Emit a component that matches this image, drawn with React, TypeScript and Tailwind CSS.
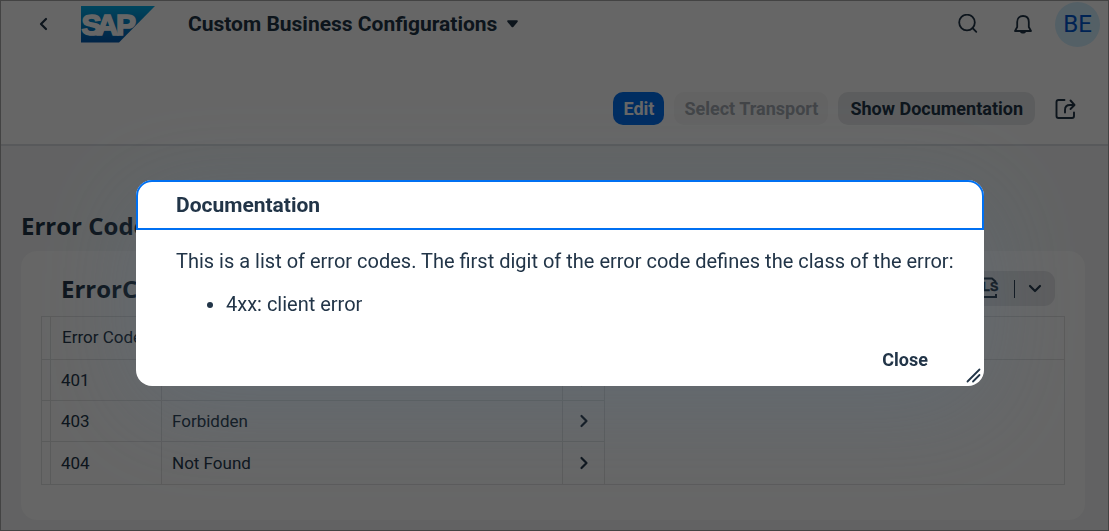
import React from "react";

type ErrorRow = { code: string; description: string };

const rows: ErrorRow[] = [
  { code: "401", description: "Unauthorized" },
  { code: "403", description: "Forbidden" },
  { code: "404", description: "Not Found" },
];

function SapLogo() {
  return (
    <svg width="74" height="37" viewBox="0 0 74 37" role="img" aria-label="SAP">
      <defs>
        <linearGradient id="sap-blue" x1="0" y1="0" x2="0" y2="1">
          <stop offset="0" stopColor="#00aeea" />
          <stop offset="0.5" stopColor="#0082c9" />
          <stop offset="1" stopColor="#0058b0" />
        </linearGradient>
      </defs>
      <path d="M0 0H74L38 36.5H0Z" fill="url(#sap-blue)" />
      <text
        x="0.5 15.5 35"
        y="29"
        fontFamily="Liberation Sans, sans-serif"
        fontWeight="700"
        fontSize="30"
        fill="#fff"
        stroke="#fff"
        strokeWidth="1.6"
      >
        SAP
      </text>
    </svg>
  );
}

function Chevron({ d, size = 16 }: { d: string; size?: number }) {
  return (
    <svg width={size} height={size} viewBox="0 0 16 16" fill="none" stroke="currentColor" strokeWidth="2.200" strokeLinecap="round" strokeLinejoin="round" aria-hidden="true">
      <path d={d} />
    </svg>
  );
}

function ShellBar() {
  return (
    <header className="flex h-[46px] items-center pr-2 pl-[34px]">
      <button aria-label="Back" className="flex size-4 items-center justify-center">
        <Chevron d="M11 3L6 8L11 13" />
      </button>
      <a href="#home" className="ml-[30px]">
        <SapLogo />
      </a>
      <button className="ml-[33px] flex items-center gap-[10px] text-[21px] leading-7 font-bold whitespace-nowrap">
        Custom Business Configurations
        <svg width="11" height="8" viewBox="0 0 11 8" fill="currentColor" aria-hidden="true">
          <path d="M1.300 .3H9.700C10.700 .3 11.200 1.300 10.500 2L6.300 6.900C5.900 7.400 5.100 7.400 4.700 6.900L.5 2C-.2 1.300 .3 .3 1.300 .3Z" />
        </svg>
      </button>
      <div className="ml-auto flex items-center">
        <button aria-label="Search" className="mr-[34px]">
          <svg width="21" height="21" viewBox="0 0 21 21" fill="none" stroke="currentColor" strokeWidth="1.800" strokeLinecap="round" aria-hidden="true">
            <circle cx="9" cy="8.500" r="7.800" />
            <path d="M14.500 14L18.300 17.800" />
          </svg>
        </button>
        <button aria-label="Notifications" className="mr-[22px]">
          <svg width="20" height="20" viewBox="0 0 20 20" fill="none" stroke="currentColor" strokeWidth="1.800" strokeLinejoin="round" aria-hidden="true">
            <path d="M2 17L4.200 13V8C4.200 4.300 6.500 2 10 2S15.800 4.300 15.800 8V13L18 17Z" />
            <path d="M7 17.500H13C13 20.300 7 20.300 7 17.500Z" fill="currentColor" stroke="none" />
          </svg>
        </button>
        <button aria-label="Profile" className="flex size-[45px] items-center justify-center rounded-full bg-[#d1efff] text-2xl text-[#0057d2]">
          BE
        </button>
      </div>
    </header>
  );
}

function ActionBar() {
  const button = "h-[33px] rounded-[10px] text-lg leading-6 font-bold whitespace-nowrap";
  return (
    <div className="flex h-[99px] items-center justify-end border-b-2 border-[#dcdfe3] pt-[26px] pr-8">
      <button className={`${button} bg-[#0070f2] px-[10px] text-white`}>Edit</button>
      <button disabled className={`${button} ml-[10px] bg-[#f8f8f8] px-[10px] text-[#a5abb2]`}>
        Select Transport
      </button>
      <button className={`${button} ml-[10px] bg-[#e7e8ea] px-3`}>Show Documentation</button>
      <button aria-label="Share" className="ml-5">
        <svg width="21" height="22" viewBox="0 0 21 22" fill="none" stroke="currentColor" strokeWidth="1.900" strokeLinecap="round" strokeLinejoin="round" aria-hidden="true">
          <path d="M9.500 2H3.500Q1.500 2 1.500 4V18Q1.500 20 3.500 20H17Q19 20 19 18V14.500" />
          <path d="M10 14.500V12Q10 7 15 7H19M15.500 2.500L19.500 7L15.500 11" />
        </svg>
      </button>
    </div>
  );
}

function ExportButton() {
  return (
    <div className="flex h-[35px] items-center rounded-[11px] bg-[#e7e8ea] pr-3 pl-2">
      <button aria-label="Export to spreadsheet">
        <svg width="29" height="24" viewBox="0 0 29 24" fill="none" stroke="currentColor" strokeWidth="2" aria-hidden="true">
          <path d="M7 5V1.500H20L24 5M7 17V20H24V17" />
          <text x="2" y="14" fontSize="12.500" fontWeight="700" fill="currentColor" stroke="currentColor" strokeWidth="0.4" fontFamily="Liberation Sans, sans-serif">
            XLS
          </text>
        </svg>
      </button>
      <span className="ml-[13px] h-[18px] w-px bg-[#223548]" />
      <button aria-label="Export options" className="ml-3">
        <Chevron d="M3 5L8 10L13 5" />
      </button>
    </div>
  );
}

function ErrorTable() {
  const line = "border-[#e2e3e4]";
  return (
    <table className={`w-full table-fixed border-collapse border text-left text-[17px] leading-6 ${line}`}>
      <colgroup>
        <col className="w-[9px]" />
        <col className="w-[111px]" />
        <col className="w-[401px]" />
        <col className="w-[42px]" />
        <col />
      </colgroup>
      <thead>
        <tr className="h-[43px]">
          <th className={`border ${line}`} />
          <th className={`overflow-hidden border-b pb-[3px] pl-[11px] font-normal whitespace-nowrap ${line}`}>Error Code</th>
          <th className={`border-b pb-[3px] pl-[10px] font-normal ${line}`}>Description</th>
          <th className={`border-b ${line}`} />
          <th className={`border-b ${line}`} />
        </tr>
      </thead>
      <tbody>
        {rows.map((row, i) => (
          <tr key={row.code} className={i === rows.length - 1 ? "h-[43px]" : "h-[41px]"}>
            <td className={`border ${line}`} />
            <td className={`border pl-[10px] ${line}`}>{row.code}</td>
            <td className={`border pl-[10px] ${line}`}>{row.description}</td>
            <td className={`border ${line}`}>
              <button aria-label={`Open ${row.code}`} className="mx-auto flex">
                <Chevron d="M5.500 3L10.500 8L5.500 13" />
              </button>
            </td>
            {i === 0 && <td rowSpan={rows.length} />}
          </tr>
        ))}
      </tbody>
    </table>
  );
}

function DocumentationDialog() {
  return (
    <div className="fixed inset-0 flex items-start justify-center bg-black/60 pt-[180px] pl-[11px]">
      <section
        role="dialog"
        aria-modal="true"
        aria-labelledby="doc-title"
        className="relative w-full max-w-[848px] rounded-2xl bg-white shadow-[0_20px_100px_0_rgba(91,115,139,0.3)]"
      >
        <header className="flex h-[50px] items-center rounded-t-2xl border-2 border-[#0070f2] px-[38px]">
          <h2 id="doc-title" className="text-[21px] leading-7 font-bold">Documentation</h2>
        </header>
        <div className="pt-[17px] pr-6 pl-10 text-xl leading-7">
          <p>This is a list of error codes. The first digit of the error code defines the class of the error:</p>
          <ul className="mt-[15px] list-disc pl-[50px]">
            <li>4xx: client error</li>
          </ul>
        </div>
        <footer className="flex justify-end px-14 pt-[30px] pb-[14px]">
          <button className="text-lg leading-6 font-bold">Close</button>
        </footer>
        <svg className="absolute right-[3px] bottom-[3px]" width="15" height="15" viewBox="0 0 15 15" stroke="currentColor" strokeWidth="1.800" strokeLinecap="round" aria-hidden="true">
          <path d="M1.500 13.500L13.500 1.500M7 13.500L13.500 7" />
        </svg>
      </section>
    </div>
  );
}

export default function App() {
  return (
    <div className="min-h-screen border border-[#a8a8a8] bg-[#f5f6f7] font-['Roboto',sans-serif] text-[#223548]">
      <div className="bg-white">
        <ShellBar />
        <ActionBar />
      </div>
      <main className="pr-[23px] pb-[10px] pl-5">
        <h1 className="pt-[64px] font-['Open_Sans',sans-serif] text-2xl leading-8 font-bold">Error Codes</h1>
        <section className="mt-[9px] rounded-2xl bg-[#fefefe] px-5 pt-5 pb-[35px]">
          <div className="flex items-center justify-between pr-[10px] pb-[10px] pl-5">
            <h2 className="font-['Open_Sans',sans-serif] text-2xl leading-8 font-bold">ErrorCodes</h2>
            <ExportButton />
          </div>
          <ErrorTable />
        </section>
      </main>
      <DocumentationDialog />
    </div>
  );
}
